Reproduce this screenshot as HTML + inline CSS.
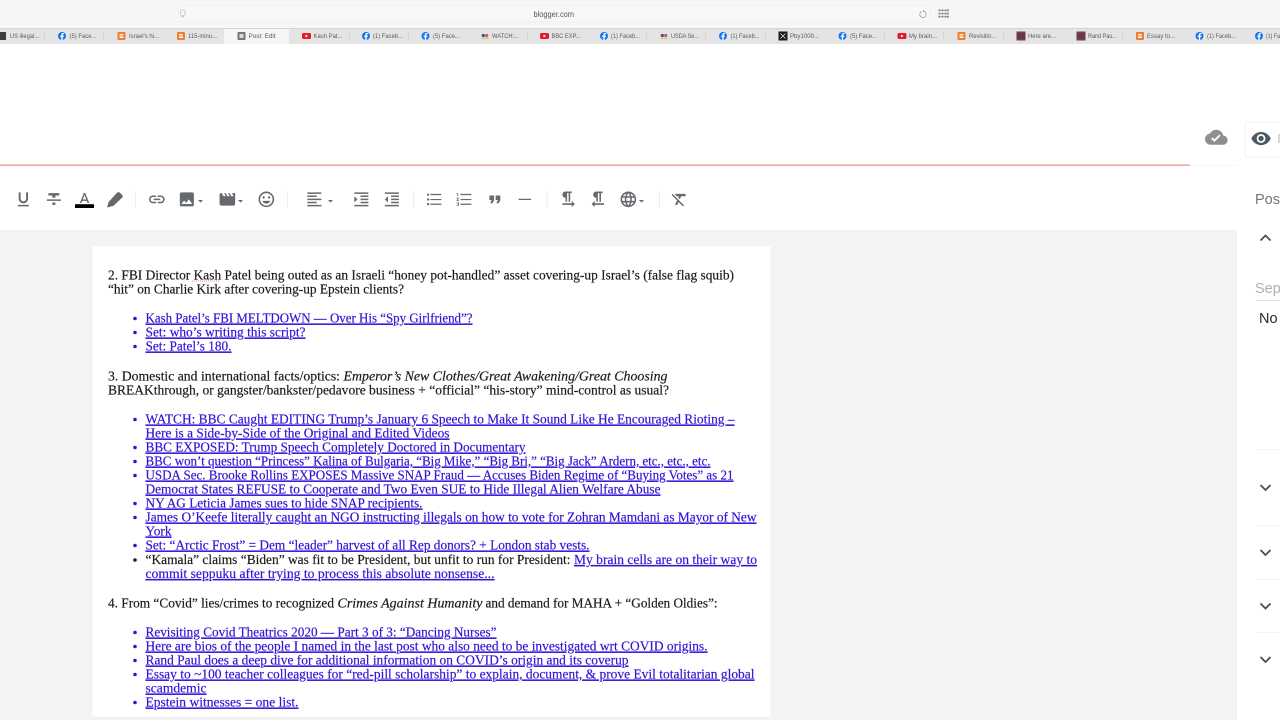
<!DOCTYPE html>
<html lang="en"><head><meta charset="utf-8"><title>Post: Edit</title>
<style>
html,body{margin:0;padding:0;width:1280px;height:720px;overflow:hidden;background:#fff}
svg{display:block;position:absolute;left:0;top:0}
.b text{font:14px "Liberation Serif",serif;fill:#1a1a1a;stroke:#1a1a1a;stroke-width:.18px}
.b text.l{fill:#2f14d6;stroke:#2f14d6;text-decoration:underline;text-decoration-thickness:1px}
.b text.i{font-style:italic}
.t text{font:6.6px "Liberation Sans",sans-serif;fill:#5c5c5c}
.ic path{fill:#666a6e}
.s text{font:14.5px "Liberation Sans",sans-serif}
</style></head><body>
<svg width="1280" height="720" viewBox="0 0 1280 720" xmlns="http://www.w3.org/2000/svg">
<defs>
<filter id="bl" x="-2%" y="-2%" width="104%" height="104%"><feGaussianBlur stdDeviation="0.3"/></filter>
<filter id="bl2" x="-2%" y="-2%" width="104%" height="104%"><feGaussianBlur stdDeviation="0.35"/></filter>
<g id="fb"><circle cx="0" cy="0" r="4" fill="#1877f2"/><path d="M.7 4V1h1.1l.2-1.3H.7v-.8c0-.4.2-.7.7-.7H2v-1.1c-1.5-.3-2.7.1-2.7 1.700v.9h-1.100V1h1.100v3z" fill="#fff"/></g>
<g id="bg"><rect x="-4" y="-4" width="8" height="8" rx="1" fill="#ef7d31"/><rect x="-2" y="-2" width="3.6" height="1.4" fill="#fff"/><rect x="-2" y=".4" width="4" height="1.6" fill="#fff"/></g>
<g id="yt"><rect x="-4.5" y="-3" width="9" height="6" rx="1.6" fill="#e01e2b"/><path d="M-1-1.4 1.6 0-1 1.4z" fill="#fff"/></g>
<g id="gp"><circle cx="-1.700" cy="-.5" r="1.600" fill="#3a5488"/><circle cx="1.700" cy="-.5" r="1.600" fill="#c25a50"/><rect x="-3.500" y="1.800" width="7" height=".9" fill="#d9b04a"/></g>
<g id="br"><rect x="-4.5" y="-4.5" width="9" height="9" fill="#74424c"/><path d="M-4.500-2H4.500M-4.500 0H4.500M-4.500 2H4.500" stroke="#5a2d38" stroke-width=".8"/></g>
<path id="dn" d="M0 0h5l-2.500 2.600z" fill="#6a6d70"/>
</defs>

<rect width="1280" height="720" fill="#fff"/>
<!-- browser chrome backgrounds -->
<rect width="1280" height="28" fill="#f6f6f6"/>
<rect y="28" width="1280" height="16" fill="#e4e4e4"/>
<rect y="28" width="1280" height="1" fill="#d4d4d4"/>
<rect x="224" y="29" width="65" height="15" fill="#f5f5f5"/>
<rect x="178" y="6" width="752" height="16" rx="3" fill="#f8f8f8" stroke="#ececec" stroke-width=".8"/>
<g filter="url(#bl2)">
<rect x="180.500" y="10" width="4.500" height="5.500" rx="1.500" fill="none" stroke="#c4c4c4" stroke-width=".8"/>
<rect x="181.500" y="16" width="2.500" height="1.200" fill="#c4c4c4"/>
<text x="533.500" y="17" font-family="Liberation Sans,sans-serif" font-size="7.800" fill="#555" textLength="40.500" lengthAdjust="spacingAndGlyphs">blogger.com</text>
<path d="M921.400 11.500a3.200 3.200 0 1 0 2.600-.2" fill="none" stroke="#9a9a9a" stroke-width=".8"/>
<path d="M923.200 9.700l1.300 1.600-1.700.9z" fill="#9a9a9a"/>
<g fill="#7a7a7a"><rect x="938.500" y="9.500" width="2" height="1.700"/><rect x="941.500" y="9.500" width="2" height="1.700"/><rect x="944.500" y="9.500" width="2" height="1.700"/><rect x="947" y="9.500" width="1.800" height="1.700"/><rect x="938.500" y="12.700" width="2" height="1.700"/><rect x="941.500" y="12.700" width="2" height="1.700"/><rect x="944.500" y="12.700" width="2" height="1.700"/><rect x="947" y="12.700" width="1.800" height="1.700"/><rect x="938.500" y="15.800" width="2" height="1.700"/><rect x="941.500" y="15.800" width="2" height="1.700"/><rect x="944.500" y="15.800" width="2" height="1.700"/><rect x="947" y="15.800" width="1.800" height="1.700"/></g>
<g fill="#d2d2d2"><rect x="44" y="32" width=".8" height="8"/><rect x="103" y="32" width=".8" height="8"/><rect x="349" y="32" width=".8" height="8"/><rect x="408" y="32" width=".8" height="8"/><rect x="527" y="32" width=".8" height="8"/><rect x="646" y="32" width=".8" height="8"/><rect x="705" y="32" width=".8" height="8"/><rect x="765" y="32" width=".8" height="8"/><rect x="884" y="32" width=".8" height="8"/><rect x="943" y="32" width=".8" height="8"/><rect x="1003" y="32" width=".8" height="8"/><rect x="1122" y="32" width=".8" height="8"/></g>
<g class="t">
<rect x="0" y="32" width="6" height="8" fill="#3c3c3c"/><text x="10" y="38" textLength="29" lengthAdjust="spacingAndGlyphs">US illegal...</text>
<use href="#fb" x="62" y="36"/><text x="69.500" y="38" textLength="27" lengthAdjust="spacingAndGlyphs">(5) Face...</text>
<use href="#bg" x="121.500" y="36"/><text x="129" y="38" textLength="30" lengthAdjust="spacingAndGlyphs">Israel's hi...</text>
<use href="#bg" x="181" y="36"/><text x="188" y="38" textLength="29" lengthAdjust="spacingAndGlyphs">115-minu...</text>
<rect x="237.500" y="32" width="8" height="8" rx="1" fill="#757575"/><rect x="239.500" y="34" width="4" height="4" fill="#ddd"/><text x="248.500" y="38" textLength="27" lengthAdjust="spacingAndGlyphs">Post: Edit</text>
<use href="#yt" x="306.500" y="36"/><text x="313.500" y="38" textLength="29" lengthAdjust="spacingAndGlyphs">Kash Pat...</text>
<use href="#fb" x="366" y="36"/><text x="373" y="38" textLength="30" lengthAdjust="spacingAndGlyphs">(1) Faceb...</text>
<use href="#fb" x="425.500" y="36"/><text x="433" y="38" textLength="27" lengthAdjust="spacingAndGlyphs">(5) Face...</text>
<use href="#gp" x="485" y="36"/><text x="492" y="38" textLength="27" lengthAdjust="spacingAndGlyphs">WATCH:...</text>
<use href="#yt" x="544.500" y="36"/><text x="551.500" y="38" textLength="29" lengthAdjust="spacingAndGlyphs">BBC EXP...</text>
<use href="#fb" x="604" y="36"/><text x="611" y="38" textLength="29" lengthAdjust="spacingAndGlyphs">(1) Faceb...</text>
<use href="#gp" x="664" y="36"/><text x="671" y="38" textLength="28" lengthAdjust="spacingAndGlyphs">USDA Se...</text>
<use href="#fb" x="723" y="36"/><text x="730.500" y="38" textLength="29" lengthAdjust="spacingAndGlyphs">(1) Faceb...</text>
<rect x="778.500" y="31.500" width="9" height="9" fill="#1a1a1a"/><path d="M780.500 33.500l5 5M785.500 33.500l-5 5" stroke="#ddd" stroke-width=".8"/><text x="790" y="38" textLength="29" lengthAdjust="spacingAndGlyphs">Pby1000...</text>
<use href="#fb" x="842.500" y="36"/><text x="850" y="38" textLength="27" lengthAdjust="spacingAndGlyphs">(5) Face...</text>
<use href="#yt" x="902" y="36"/><text x="909" y="38" textLength="28" lengthAdjust="spacingAndGlyphs">My brain...</text>
<use href="#bg" x="961.500" y="36"/><text x="969" y="38" textLength="27" lengthAdjust="spacingAndGlyphs">Revisitin...</text>
<use href="#br" x="1021" y="36"/><text x="1028" y="38" textLength="28" lengthAdjust="spacingAndGlyphs">Here are...</text>
<use href="#br" x="1081" y="36"/><text x="1088" y="38" textLength="29" lengthAdjust="spacingAndGlyphs">Rand Pau...</text>
<use href="#bg" x="1140" y="36"/><text x="1147" y="38" textLength="28" lengthAdjust="spacingAndGlyphs">Essay to...</text>
<use href="#fb" x="1199.500" y="36"/><text x="1207" y="38" textLength="29" lengthAdjust="spacingAndGlyphs">(1) Faceb...</text>
<use href="#fb" x="1259" y="36"/><text x="1266" y="38" textLength="14" lengthAdjust="spacingAndGlyphs">(1) Fa</text>
</g>
</g>

<!-- editor background -->
<rect x="0" y="230" width="1237" height="490" fill="#f3f3f5"/>
<rect x="92" y="246" width="679" height="472" rx="2" fill="#f9f9fa"/>
<rect x="93" y="247" width="677" height="470" fill="#fff"/>
<rect x="93" y="717" width="677" height="1" fill="#ececec"/>
<rect x="0" y="164.500" width="1190" height="1.400" fill="#eda48c"/>
<rect x="1190" y="164.800" width="47" height="1" fill="#f6f6f6"/>

<!-- save + preview -->
<g filter="url(#bl)">
<path transform="translate(1205 126) scale(.94)" d="M19.350 10.040C18.670 6.590 15.640 4 12 4 9.110 4 6.600 5.640 5.350 8.040 2.340 8.360 0 10.910 0 14c0 3.310 2.690 6 6 6h13c2.760 0 5-2.240 5-5 0-2.640-2.050-4.780-4.650-4.960zM10 17l-3.500-3.500 1.410-1.410L10 14.170 15.180 9l1.410 1.410L10 17z" fill="#8f8f8f"/>
<rect x="1245" y="122" width="40" height="35" rx="3" fill="#fff" stroke="#f0f0f0"/>
<path transform="translate(1250.500 128) scale(.88)" d="M12 4.500C7 4.500 2.730 7.610 1 12c1.730 4.390 6 7.500 11 7.500s9.270-3.110 11-7.500c-1.730-4.390-6-7.500-11-7.500zM12 17c-2.760 0-5-2.240-5-5s2.240-5 5-5 5 2.240 5 5-2.240 5-5 5zm0-8c-1.660 0-3 1.340-3 3s1.340 3 3 3 3-1.340 3-3-1.340-3-3-3z" fill="#4a5a62"/>
<rect x="1278" y="134" width="2" height="9" fill="#d8d8d8"/>
</g>

<!-- toolbar -->
<g class="ic" filter="url(#bl2)">
<path transform="translate(14 190) scale(.78)" d="M12 17c3.310 0 6-2.690 6-6V3h-2.500v8c0 1.930-1.570 3.500-3.500 3.500S8.500 12.930 8.500 11V3H6v8c0 3.310 2.690 6 6 6zm-7 2v2h14v-2H5z"/>
<path transform="translate(44.500 190) scale(.78)" d="M10 19h4v-3h-4v3zM5 4v3h5v3h4V7h5V4H5zM3 14h18v-2H3v2z"/>
<path transform="translate(75.900 190.800) scale(.72)" d="M11 3L5.500 17h2.250l1.120-3h6.250l1.120 3h2.250L13 3h-2zm-1.380 9L12 5.670 14.380 12H9.620z"/>
<rect x="75" y="204.200" width="19" height="3.800" fill="#000"/>
<path d="M107 207.500l1.600-5.500 8.400-9.200c.8-.8 2-.9 2.900-.1l2.200 2c.9.900.9 2.100.1 2.900l-9 8.400z"/>
<path transform="translate(147.500 190) scale(.78)" d="M3.900 12c0-1.710 1.390-3.100 3.100-3.100h4V7H7c-2.760 0-5 2.240-5 5s2.240 5 5 5h4v-1.900H7c-1.710 0-3.100-1.390-3.100-3.100zM8 13h8v-2H8v2zm9-6h-4v1.900h4c1.710 0 3.100 1.390 3.100 3.100s-1.390 3.100-3.100 3.100h-4V17h4c2.760 0 5-2.240 5-5s-2.240-5-5-5z"/>
<path transform="translate(177.500 190) scale(.78)" d="M21 19V5c0-1.100-.9-2-2-2H5c-1.100 0-2 .9-2 2v14c0 1.100.9 2 2 2h14c1.100 0 2-.9 2-2zM8.500 13.500l2.500 3.010L14.500 12l4.500 6H5l3.500-4.500z"/>
<use href="#dn" x="198" y="200"/>
<path transform="translate(218 190) scale(.78)" d="M18 4l2 4h-3l-2-4h-2l2 4h-3l-2-4H8l2 4H7L5 4H4c-1.100 0-1.990.9-1.990 2L2 18c0 1.100.9 2 2 2h16c1.100 0 2-.9 2-2V4h-4z"/>
<use href="#dn" x="238" y="200"/>
<path transform="translate(257 190) scale(.78)" d="M11.990 2C6.470 2 2 6.480 2 12s4.470 10 9.990 10C17.520 22 22 17.520 22 12S17.520 2 11.990 2zM12 20c-4.420 0-8-3.580-8-8s3.580-8 8-8 8 3.580 8 8-3.580 8-8 8zm3.500-9c.83 0 1.500-.67 1.500-1.500S16.330 8 15.500 8 14 8.670 14 9.500s.67 1.500 1.500 1.500zm-7 0c.83 0 1.500-.67 1.500-1.500S9.330 8 8.500 8 7 8.670 7 9.500 7.670 11 8.500 11zm3.500 6.500c2.330 0 4.310-1.460 5.110-3.500H6.890c.8 2.040 2.780 3.500 5.110 3.500z"/>
<path transform="translate(305 190) scale(.78)" d="M15 15H3v2h12v-2zm0-8H3v2h12V7zM3 13h18v-2H3v2zm0 8h18v-2H3v2zM3 3v2h18V3H3z"/>
<use href="#dn" x="328" y="200"/>
<path transform="translate(352 190) scale(.78)" d="M3 21h18v-2H3v2zM3 8v8l4-4-4-4zm8 9h10v-2H11v2zM3 3v2h18V3H3zm8 6h10V7H11v2zm0 4h10v-2H11v2z"/>
<path transform="translate(382.500 190) scale(.78)" d="M11 17h10v-2H11v2zm-8-5l4 4V8l-4 4zm0 9h18v-2H3v2zM3 3v2h18V3H3zm8 6h10V7H11v2zm0 4h10v-2H11v2z"/>
<path transform="translate(425 190) scale(.78)" d="M4 10.500c-.83 0-1.500.67-1.500 1.500s.67 1.500 1.500 1.500 1.500-.67 1.500-1.500-.67-1.500-1.500-1.500zm0-6c-.83 0-1.500.67-1.500 1.500S3.170 7.500 4 7.500 5.500 6.830 5.500 6 4.830 4.500 4 4.500zm0 12c-.83 0-1.500.68-1.500 1.500s.68 1.500 1.500 1.500 1.500-.68 1.500-1.500-.67-1.500-1.500-1.500zM7 19h14v-1.500H7v1.500zm0-6h14v-1.500H7v1.500zm0-8v1.500h14V5H7z"/>
<path transform="translate(455 190) scale(.78)" d="M2 17h2v.5H3v1h1v.5H2v1h3v-4H2v1zm1-9h1V4H2v1h1v3zm-1 3h1.800L2 13.100v.9h3v-1H3.200L5 10.900V10H2v1zm5-6v1.500h14V5H7zm0 14h14v-1.500H7v1.500zm0-6h14v-1.500H7v1.500z"/>
<path transform="translate(485.500 190) scale(.78)" d="M6 17h3l2-4V7H5v6h3zm8 0h3l2-4V7h-6v6h3z"/>
<path transform="translate(515.500 190) scale(.78)" d="M4 11.200h16v1.600H4z"/>
<path transform="translate(558.500 190) scale(.78)" d="M9 10v5h2V4h2v11h2V4h2V2H9C6.790 2 5 3.790 5 6s1.790 4 4 4zm12 8l-4-4v3H5v2h12v3l4-4z"/>
<path transform="translate(588.500 190) scale(.78)" d="M10 10v5h2V4h2v11h2V4h2V2h-8C7.790 2 6 3.790 6 6s1.790 4 4 4zm-2 7v-3l-4 4 4 4v-3h12v-2H8z"/>
<path transform="translate(619 190) scale(.78)" d="M11.990 2C6.470 2 2 6.480 2 12s4.470 10 9.990 10C17.520 22 22 17.520 22 12S17.520 2 11.990 2zm6.930 6h-2.950c-.32-1.250-.78-2.450-1.380-3.560 1.840.63 3.370 1.910 4.330 3.560zM12 4.040c.83 1.200 1.480 2.530 1.910 3.960h-3.820c.43-1.430 1.080-2.760 1.910-3.960zM4.260 14C4.100 13.360 4 12.690 4 12s.1-1.360.26-2h3.380c-.08.66-.14 1.320-.14 2 0 .68.06 1.340.14 2H4.260zm.82 2h2.950c.32 1.250.78 2.450 1.380 3.560-1.840-.63-3.370-1.900-4.330-3.560zm2.950-8H5.080c.96-1.660 2.490-2.930 4.330-3.560C8.810 5.550 8.350 6.750 8.030 8zM12 19.960c-.83-1.200-1.480-2.530-1.910-3.960h3.820c-.43 1.430-1.080 2.760-1.910 3.960zM14.340 14H9.660c-.09-.66-.16-1.320-.16-2 0-.68.07-1.350.16-2h4.680c.09.650.16 1.320.16 2 0 .68-.07 1.340-.16 2zm.25 5.560c.6-1.110 1.060-2.310 1.380-3.560h2.950c-.96 1.650-2.490 2.930-4.330 3.560zM16.360 14c.08-.66.14-1.320.14-2 0-.68-.06-1.340-.14-2h3.380c.16.640.26 1.310.26 2s-.1 1.360-.26 2h-3.380z"/>
<use href="#dn" x="639" y="200"/>
<path transform="translate(670 190) scale(.78)" d="M3.270 5L2 6.270l6.970 6.970L6.500 19h3l1.570-3.660L16.730 21 18 19.730 3.550 5.270 3.270 5zM6 5v.18L8.820 8h2.400l-.72 1.680 2.100 2.100L14.210 8H20V5H6z"/>
</g>
<g fill="#ececec"><rect x="135" y="191" width="1" height="17"/><rect x="287" y="191" width="1" height="17"/><rect x="413" y="191" width="1" height="17"/><rect x="546.500" y="191" width="1" height="17"/><rect x="659" y="191" width="1" height="17"/></g>

<!-- document text -->
<g class="b" filter="url(#bl)" transform="translate(0 .5)">
<text x="108" y="279" textLength="626" lengthAdjust="spacingAndGlyphs">2. FBI Director Kash Patel being outed as an Israeli “honey pot-handled” asset covering-up Israel’s (false flag squib)</text>
<text x="108" y="293" textLength="296" lengthAdjust="spacingAndGlyphs">“hit” on Charlie Kirk after covering-up Epstein clients?</text>
<path d="M192 280.500h28" stroke="#e06a60" stroke-width=".7" stroke-dasharray="1 1"/>
<text class="l" x="145.500" y="322" textLength="327" lengthAdjust="spacingAndGlyphs">Kash Patel’s FBI MELTDOWN — Over His “Spy Girlfriend”?</text>
<text class="l" x="145.500" y="336" textLength="160" lengthAdjust="spacingAndGlyphs">Set: who’s writing this script?</text>
<text class="l" x="145.500" y="350" textLength="86" lengthAdjust="spacingAndGlyphs">Set: Patel’s 180.</text>

<text x="108" y="380" textLength="232" lengthAdjust="spacingAndGlyphs">3. Domestic and international facts/optics:</text>
<text class="i" x="343.500" y="380" textLength="324" lengthAdjust="spacingAndGlyphs">Emperor’s New Clothes/Great Awakening/Great Choosing</text>
<text x="108" y="394" textLength="561" lengthAdjust="spacingAndGlyphs">BREAKthrough, or gangster/bankster/pedavore business + “official” “his-story” mind-control as usual?</text>

<text class="l" x="145.500" y="423" textLength="589" lengthAdjust="spacingAndGlyphs">WATCH: BBC Caught EDITING Trump’s January 6 Speech to Make It Sound Like He Encouraged Rioting –</text>
<text class="l" x="145.500" y="437" textLength="304" lengthAdjust="spacingAndGlyphs">Here is a Side-by-Side of the Original and Edited Videos</text>
<text class="l" x="145.500" y="451" textLength="380" lengthAdjust="spacingAndGlyphs">BBC EXPOSED: Trump Speech Completely Doctored in Documentary</text>
<text class="l" x="145.500" y="465" textLength="565" lengthAdjust="spacingAndGlyphs">BBC won’t question “Princess” Kalina of Bulgaria, “Big Mike,” “Big Bri,” “Big Jack” Ardern, etc., etc., etc.</text>
<path d="M315 468h27" stroke="#c96a60" stroke-width=".7" stroke-dasharray="1 1"/>
<text class="l" x="145.500" y="479" textLength="588" lengthAdjust="spacingAndGlyphs">USDA Sec. Brooke Rollins EXPOSES Massive SNAP Fraud — Accuses Biden Regime of “Buying Votes” as 21</text>
<text class="l" x="145.500" y="493" textLength="515" lengthAdjust="spacingAndGlyphs">Democrat States REFUSE to Cooperate and Two Even SUE to Hide Illegal Alien Welfare Abuse</text>
<text class="l" x="145.500" y="507" textLength="277" lengthAdjust="spacingAndGlyphs">NY AG Leticia James sues to hide SNAP recipients.</text>
<text class="l" x="145.500" y="521" textLength="611" lengthAdjust="spacingAndGlyphs">James O’Keefe literally caught an NGO instructing illegals on how to vote for Zohran Mamdani as Mayor of New</text>
<text class="l" x="145.500" y="535" textLength="26" lengthAdjust="spacingAndGlyphs">York</text>
<text class="l" x="145.500" y="549" textLength="444" lengthAdjust="spacingAndGlyphs">Set: “Arctic Frost” = Dem “leader” harvest of all Rep donors? + London stab vests.</text>
<text x="145.500" y="563.500" textLength="425" lengthAdjust="spacingAndGlyphs">“Kamala” claims “Biden” was fit to be President, but unfit to run for President:</text>
<text class="l" x="574" y="563.500" textLength="183" lengthAdjust="spacingAndGlyphs">My brain cells are on their way to</text>
<text class="l" x="145.500" y="577.500" textLength="349" lengthAdjust="spacingAndGlyphs">commit seppuku after trying to process this absolute nonsense...</text>

<text x="108" y="607" textLength="226" lengthAdjust="spacingAndGlyphs">4. From “Covid” lies/crimes to recognized</text>
<text class="i" x="337.500" y="607" textLength="145" lengthAdjust="spacingAndGlyphs">Crimes Against Humanity</text>
<text x="485.500" y="607" textLength="232" lengthAdjust="spacingAndGlyphs">and demand for MAHA + “Golden Oldies”:</text>

<text class="l" x="145.500" y="636" textLength="351" lengthAdjust="spacingAndGlyphs">Revisiting Covid Theatrics 2020 — Part 3 of 3: “Dancing Nurses”</text>
<text class="l" x="145.500" y="650" textLength="562" lengthAdjust="spacingAndGlyphs">Here are bios of the people I named in the last post who also need to be investigated wrt COVID origins.</text>
<text class="l" x="145.500" y="664" textLength="483" lengthAdjust="spacingAndGlyphs">Rand Paul does a deep dive for additional information on COVID’s origin and its coverup</text>
<text class="l" x="145.500" y="678" textLength="609" lengthAdjust="spacingAndGlyphs">Essay to ~100 teacher colleagues for “red-pill scholarship” to explain, document, &amp; prove Evil totalitarian global</text>
<text class="l" x="145.500" y="692" textLength="61" lengthAdjust="spacingAndGlyphs">scamdemic</text>
<text class="l" x="145.500" y="706" textLength="153" lengthAdjust="spacingAndGlyphs">Epstein witnesses = one list.</text>

<g fill="#2f14d6"><circle cx="135" cy="318" r="1.800"/><circle cx="135" cy="332" r="1.800"/><circle cx="135" cy="346" r="1.800"/><circle cx="135" cy="419" r="1.800"/><circle cx="135" cy="447" r="1.800"/><circle cx="135" cy="461" r="1.800"/><circle cx="135" cy="475" r="1.800"/><circle cx="135" cy="503" r="1.800"/><circle cx="135" cy="517" r="1.800"/><circle cx="135" cy="545" r="1.800"/><circle cx="135" cy="632" r="1.800"/><circle cx="135" cy="646" r="1.800"/><circle cx="135" cy="660" r="1.800"/><circle cx="135" cy="674" r="1.800"/><circle cx="135" cy="702" r="1.800"/></g>
<circle cx="135" cy="559.500" r="1.800" fill="#222"/>
</g>

<!-- right panel -->
<g class="s" filter="url(#bl)">
<text x="1255" y="204" fill="#757575">Pos</text>
<text x="1255" y="293" fill="#b0b0b0">Sep</text>
<rect x="1256" y="300" width="24" height="1" fill="#e4e4e4"/>
<text x="1259" y="323" fill="#2a2a2a">No</text>
<path d="M1260.500 240.500l5-5 5 5" fill="none" stroke="#4e4e52" stroke-width="1.800"/>
<path d="M1260.500 485l5 5 5-5" fill="none" stroke="#4e4e52" stroke-width="1.800"/>
<path d="M1260.500 550l5 5 5-5" fill="none" stroke="#4e4e52" stroke-width="1.800"/>
<path d="M1260.500 603.500l5 5 5-5" fill="none" stroke="#4e4e52" stroke-width="1.800"/>
<path d="M1260.500 657l5 5 5-5" fill="none" stroke="#4e4e52" stroke-width="1.800"/>
<g fill="#f4f4f4"><rect x="1256" y="449" width="24" height="1"/><rect x="1256" y="525" width="24" height="1"/><rect x="1256" y="579" width="24" height="1"/><rect x="1256" y="632" width="24" height="1"/></g>
</g>
</svg>
</body></html>
